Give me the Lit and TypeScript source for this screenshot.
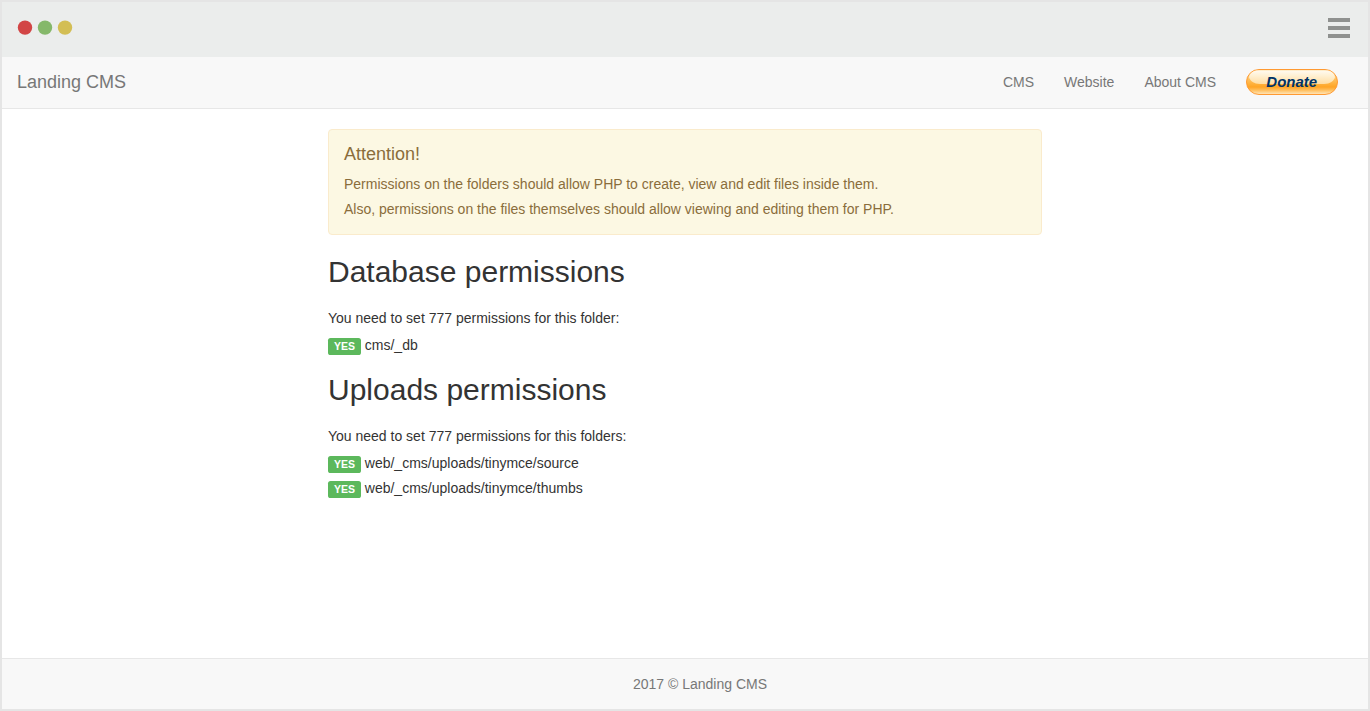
import { LitElement, html, css } from "lit";
import { customElement } from "lit/decorators.js";

interface Section {
  title: string;
  note: string;
  folders: string[];
}

const SECTIONS: Section[] = [
  {
    title: "Database permissions",
    note: "You need to set 777 permissions for this folder:",
    folders: ["cms/_db"],
  },
  {
    title: "Uploads permissions",
    note: "You need to set 777 permissions for this folders:",
    folders: ["web/_cms/uploads/tinymce/source", "web/_cms/uploads/tinymce/thumbs"],
  },
];

@customElement("donate-button")
export class DonateButton extends LitElement {
  static styles = css`
    :host { display: block; width: 92px; height: 26px; }
    svg { display: block; }
    text { font: italic bold 15px "Liberation Sans", Arial, sans-serif; fill: #003366; }
  `;

  render() {
    return html`
      <svg width="92" height="26" viewBox="0 0 92 26" role="img" aria-label="Donate">
        <defs>
          <linearGradient id="body" x1="0" y1="0" x2="0" y2="1">
            <stop offset="0" stop-color="#ffe2ac" />
            <stop offset="0.35" stop-color="#ffc568" />
            <stop offset="0.58" stop-color="#ffb03a" />
            <stop offset="0.7" stop-color="#ffa525" />
            <stop offset="0.82" stop-color="#ffbd5a" />
            <stop offset="1" stop-color="#ffe9c2" />
          </linearGradient>
          <linearGradient id="gloss" x1="0" y1="0" x2="0" y2="1">
            <stop offset="0" stop-color="#fffaf0" />
            <stop offset="0.4" stop-color="#fff0d2" />
            <stop offset="1" stop-color="#ffdda2" />
          </linearGradient>
        </defs>
        <rect x="0.5" y="0.5" width="91" height="25" rx="12.5" fill="url(#body)" stroke="#ff9a33" />
        <path d="M12 1.5H80C85 1.5 88 4 89 8C88 12 84 15 78 15H14C8 15 4 12 3 8C4 4 7 1.5 12 1.5Z" fill="url(#gloss)" />
        <text x="20.3" y="18">Donate</text>
      </svg>
    `;
  }
}

@customElement("app-root")
export class AppRoot extends LitElement {
  static styles = css`
    :host {
      display: flex;
      flex-direction: column;
      box-sizing: border-box;
      height: 711px;
      border: 2px solid #e5e5e5;
      background: #fff;
      color: #333;
      font: 14px/20px "Liberation Sans", Arial, sans-serif;
    }
    .chrome {
      display: flex;
      align-items: center;
      justify-content: space-between;
      box-sizing: border-box;
      height: 55px;
      padding: 0 18px 3px 15px;
      background: #ebedec;
    }
    .chrome svg { display: block; }
    .nav {
      display: flex;
      align-items: center;
      justify-content: space-between;
      box-sizing: border-box;
      height: 52px;
      padding: 0 30px 1px 15px;
      border-bottom: 1px solid #e7e7e7;
      background: #f8f8f8;
      color: #777;
    }
    .brand { font-size: 18px; }
    .links { display: flex; align-items: center; gap: 30px; }
    .main {
      flex: 1;
      box-sizing: border-box;
      width: 714px;
      margin-left: 326px;
      padding-top: 20px;
    }
    .alert {
      box-sizing: border-box;
      height: 106px;
      padding: 15px;
      border: 1px solid #faebcc;
      border-radius: 4px;
      background: #fcf8e3;
      color: #8a6d3b;
    }
    .alert-title { margin: 0 0 10px; font-size: 18px; font-weight: 400; line-height: 19px; }
    .alert p { margin: 0 0 5px; }
    .section { margin-top: 20px; }
    .section + .section { margin-top: 18px; }
    .title { margin: 0 0 20px; font-size: 30px; font-weight: 400; line-height: 33px; }
    .note { margin: 0 0 7px; }
    .folders { display: flex; flex-direction: column; gap: 5px; margin: 0; padding: 0; list-style: none; }
    .folder { display: flex; align-items: flex-start; gap: 3.8px; height: 20px; }
    .badge {
      box-sizing: border-box;
      width: 33px;
      height: 17px;
      margin-top: 3px;
      border-radius: 2.6px;
      background: #5cb85c;
      color: #fff;
      font-size: 10.5px;
      font-weight: 700;
      line-height: 17px;
      text-align: center;
    }
    .footer {
      box-sizing: border-box;
      height: 51px;
      padding: 15px 0 0 30px;
      border-top: 1px solid #e7e7e7;
      background: #f8f8f8;
      color: #777;
      text-align: center;
    }
  `;

  private renderSection(section: Section) {
    return html`
      <section class="section">
        <h2 class="title">${section.title}</h2>
        <p class="note">${section.note}</p>
        <ul class="folders">
          ${section.folders.map(
            (path) => html`<li class="folder"><span class="badge">YES</span><span>${path}</span></li>`
          )}
        </ul>
      </section>
    `;
  }

  render() {
    return html`
      <div class="chrome">
        <svg width="56" height="16" viewBox="0 0 56 16">
          <circle cx="8" cy="7.6" r="7.2" fill="#d24545" />
          <circle cx="28" cy="7.6" r="7.2" fill="#85b86a" />
          <circle cx="48" cy="7.6" r="7.2" fill="#d3be54" />
        </svg>
        <svg width="22" height="20" viewBox="0 0 22 20" fill="#8f918f">
          <rect width="22" height="4" />
          <rect y="8" width="22" height="4" />
          <rect y="16" width="22" height="4" />
        </svg>
      </div>
      <nav class="nav">
        <span class="brand">Landing CMS</span>
        <div class="links">
          <span>CMS</span>
          <span>Website</span>
          <span>About CMS</span>
          <donate-button></donate-button>
        </div>
      </nav>
      <main class="main">
        <div class="alert">
          <h4 class="alert-title">Attention!</h4>
          <p>Permissions on the folders should allow PHP to create, view and edit files inside them.</p>
          <p>Also, permissions on the files themselves should allow viewing and editing them for PHP.</p>
        </div>
        ${SECTIONS.map((section) => this.renderSection(section))}
      </main>
      <footer class="footer">2017 © Landing CMS</footer>
    `;
  }
}
